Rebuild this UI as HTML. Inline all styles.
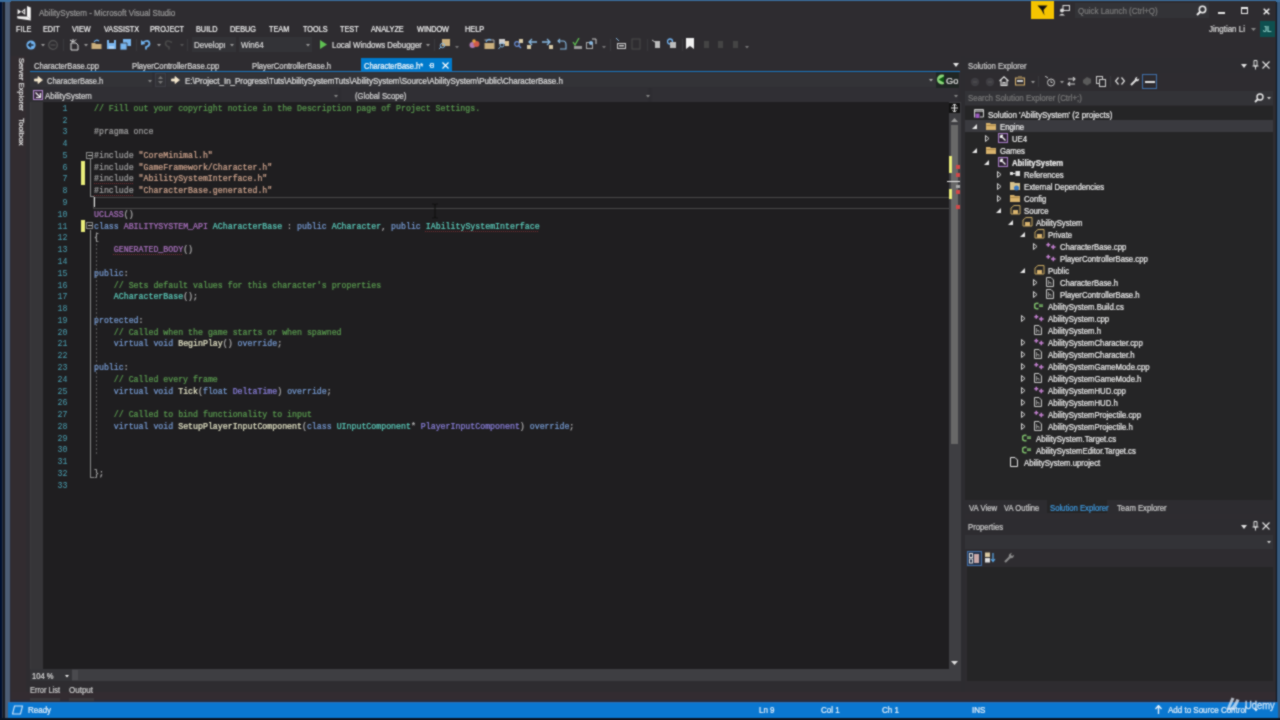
<!DOCTYPE html><html><head><meta charset="utf-8"><style>
*{margin:0;padding:0;box-sizing:border-box}
html,body{width:1280px;height:720px;overflow:hidden;background:#0b1422}
body{font-family:"Liberation Sans",sans-serif;font-size:8px;color:#d0d0d0;position:relative}
.a{position:absolute}
.t{position:absolute;white-space:nowrap;line-height:10px;height:10px;-webkit-text-stroke:0.2px currentColor}
.code{font-family:"Liberation Mono",monospace;font-size:8.25px;line-height:11.78px;white-space:pre;position:absolute;color:#dcdcdc}
.cm{color:#5b9e50}.pp{color:#a2a2a2}.st{color:#d4a890}.kw{color:#779dd6}.ty{color:#5ccfbe}.mc{color:#ac72c2}.fn{color:#e6e6c8}.pa{color:#8c82e0}.pu{color:#b4b4b4}
.code{-webkit-text-stroke:0.2px currentColor}
.ln{font-family:"Liberation Mono",monospace;font-size:8.25px;line-height:11.78px;white-space:pre;position:absolute;color:#4aa0b2;text-align:right}
.sq{text-decoration:underline dotted #7a2c30;text-decoration-thickness:1px;text-underline-offset:1.5px}
.tree .t{color:#e0e0e0}
</style></head><body><svg width="0" height="0" style="position:absolute"><filter id="bl" x="0" y="0" width="100%" height="100%" color-interpolation-filters="sRGB"><feConvolveMatrix order="3" kernelMatrix="1 2 1 2 8 2 1 2 1" divisor="20" edgeMode="duplicate"/></filter></svg><div id="root" style="position:absolute;left:0;top:0;width:1280px;height:720px;filter:url(#bl)">
<div class="a" style="left:0px;top:0px;width:2px;height:720px;background:#001030;"></div>
<div class="a" style="left:1.5px;top:0px;width:1.5px;height:720px;background:#2a3242;"></div>
<div class="a" style="left:3px;top:0px;width:2px;height:720px;background:#161a22;"></div>
<div class="a" style="left:5px;top:0px;width:4.5px;height:720px;background:#4d5d75;"></div>
<div class="a" style="left:9.5px;top:0px;width:1.5px;height:720px;background:#2b2a36;"></div>
<div class="a" style="left:1276.5px;top:0px;width:3.5px;height:720px;background:#37597c;"></div>
<div class="a" style="left:0px;top:0px;width:1280px;height:1.5px;background:#3a6e9e;"></div>
<div class="a" style="left:11px;top:1px;width:1265px;height:717px;background:#2e2c30;"></div>
<div class="a" style="left:11px;top:56px;width:15px;height:645px;background:#322c30;"></div>
<svg class="a" style="left:12px;top:2px" width="24" height="20" viewBox="0 0 24 20"><path d="M5.6 7 L9.2 9.7 L5.6 12.4 Z M13.3 6.2 L9.2 9.7 L13.3 13 Z" fill="#f0f0f0"/><path d="M12.2 8.6 L10.6 9.7 L12.2 10.9 Z" fill="#3a3a3a"/><path d="M15 4 L18.8 5.6 L18.8 17 L15 14.6 Z" fill="#f4f4f4"/><path d="M5 14.2 L15 14.6 L18.8 17 L18.8 18.6 L5.5 16.4 Z" fill="#f0f0f0"/></svg>
<div class="t" style="left:39px;top:8px;font-size:8.6px;color:#9a9a9a;transform:scaleX(0.9302);transform-origin:0 50%;">AbilitySystem - Microsoft Visual Studio</div>
<div class="a" style="left:1031px;top:1px;width:23px;height:18px;background:#f5c400;"></div>
<svg class="a" style="left:1037px;top:5px" width="11" height="11" viewBox="0 0 11 11"><path d="M0.5 0.5 L10.5 0.5 L6.5 5 L7.5 10.5 L4.5 5 Z" fill="#111"/></svg>
<svg class="a" style="left:1059px;top:5px" width="11" height="11" viewBox="0 0 11 11"><rect x="4" y="0.5" width="6.5" height="5" fill="none" stroke="#ddd" stroke-width="1"/><circle cx="3" cy="5.5" r="2" fill="#ddd"/><path d="M0 10.5 Q3 7 6 10.5 Z" fill="#ddd"/></svg>
<div class="a" style="left:1075px;top:3px;width:134px;height:15px;background:#333337;"></div>
<div class="t" style="left:1078px;top:5.5px;font-size:8.6px;color:#7c7c7c;transform:scaleX(0.9302);transform-origin:0 50%;">Quick Launch (Ctrl+Q)</div>
<svg class="a" style="left:1196px;top:5px" width="11" height="11" viewBox="0 0 11 11"><circle cx="6.5" cy="4.5" r="3.2" fill="none" stroke="#eee" stroke-width="1.5"/><path d="M4.3 6.7 L1 10" stroke="#eee" stroke-width="2"/></svg>
<div class="a" style="left:1218px;top:12px;width:7px;height:2px;background:#e6e6e6;"></div>
<div class="a" style="left:1241px;top:7px;width:7px;height:7px;border:1.2px solid #ececec;border-top-width:2.2px"></div>
<svg class="a" style="left:1263px;top:7.5px" width="7" height="7" viewBox="0 0 7 7"><path d="M0.7 0.7 L6.3 6.3 M6.3 0.7 L0.7 6.3" stroke="#f0f0f0" stroke-width="1.5"/></svg>
<div class="t" style="left:1209px;top:24px;font-size:8.6px;color:#dcdcdc;transform:scaleX(0.9302);transform-origin:0 50%;">Jingtian Li</div>
<svg class="a" style="left:1251px;top:28px" width="5" height="3"><path d="M0 0 L5 0 L2.5 3 Z" fill="#888"/></svg>
<div class="a" style="left:1260px;top:21px;width:15px;height:16px;background:#0e4f4f;"></div>
<div class="t" style="left:1262.5px;top:24px;font-size:8.6px;color:#9cd8d0;transform:scaleX(0.9302);transform-origin:0 50%;">JL</div>
<div class="t" style="left:16px;top:23.5px;font-size:8.6px;color:#f4f4f4;transform:scaleX(0.8488);transform-origin:0 50%;">FILE</div>
<div class="t" style="left:43px;top:23.5px;font-size:8.6px;color:#f4f4f4;transform:scaleX(0.8488);transform-origin:0 50%;">EDIT</div>
<div class="t" style="left:72px;top:23.5px;font-size:8.6px;color:#f4f4f4;transform:scaleX(0.8488);transform-origin:0 50%;">VIEW</div>
<div class="t" style="left:104px;top:23.5px;font-size:8.6px;color:#f4f4f4;transform:scaleX(0.8488);transform-origin:0 50%;">VASSISTX</div>
<div class="t" style="left:150px;top:23.5px;font-size:8.6px;color:#f4f4f4;transform:scaleX(0.8488);transform-origin:0 50%;">PROJECT</div>
<div class="t" style="left:195.5px;top:23.5px;font-size:8.6px;color:#f4f4f4;transform:scaleX(0.8488);transform-origin:0 50%;">BUILD</div>
<div class="t" style="left:230px;top:23.5px;font-size:8.6px;color:#f4f4f4;transform:scaleX(0.8488);transform-origin:0 50%;">DEBUG</div>
<div class="t" style="left:268.5px;top:23.5px;font-size:8.6px;color:#f4f4f4;transform:scaleX(0.8488);transform-origin:0 50%;">TEAM</div>
<div class="t" style="left:302.5px;top:23.5px;font-size:8.6px;color:#f4f4f4;transform:scaleX(0.8488);transform-origin:0 50%;">TOOLS</div>
<div class="t" style="left:340px;top:23.5px;font-size:8.6px;color:#f4f4f4;transform:scaleX(0.8488);transform-origin:0 50%;">TEST</div>
<div class="t" style="left:370.5px;top:23.5px;font-size:8.6px;color:#f4f4f4;transform:scaleX(0.8488);transform-origin:0 50%;">ANALYZE</div>
<div class="t" style="left:417px;top:23.5px;font-size:8.6px;color:#f4f4f4;transform:scaleX(0.8488);transform-origin:0 50%;">WINDOW</div>
<div class="t" style="left:464.5px;top:23.5px;font-size:8.6px;color:#f4f4f4;transform:scaleX(0.8488);transform-origin:0 50%;">HELP</div>
<svg class="a" style="left:26px;top:40px" width="10" height="10" viewBox="0 0 10 10"><circle cx="5" cy="5" r="4.6" fill="#6fb1ee"/><path d="M7.5 5 L2.8 5 M5 2.8 L2.6 5 L5 7.2" stroke="#1e2a38" stroke-width="1.4" fill="none"/></svg>
<svg class="a" style="left:40.5px;top:44px" width="4" height="3" viewBox="0 0 4 3"><path d="M0 0 L4 0 L2 2.5 Z" fill="#9a9a9a"/></svg>
<svg class="a" style="left:48px;top:40px" width="10" height="10" viewBox="0 0 10 10"><circle cx="5" cy="5" r="4.3" fill="none" stroke="#555" stroke-width="1.2"/><path d="M2.5 5 L7.5 5" stroke="#555" stroke-width="1.2"/></svg>
<div class="a" style="left:63px;top:39px;width:1px;height:12px;background:#3a393d;"></div>
<svg class="a" style="left:69px;top:39px" width="10" height="12" viewBox="0 0 10 12"><path d="M2 4 L7 4 L9 6 L9 11 L2 11 Z" fill="none" stroke="#ddd" stroke-width="1"/><path d="M1 1 L4 3 M4 0 L4 3 M7 0.5 L4.5 3" stroke="#eee" stroke-width="1"/></svg>
<svg class="a" style="left:83.5px;top:44px" width="4" height="3" viewBox="0 0 4 3"><path d="M0 0 L4 0 L2 2.5 Z" fill="#9a9a9a"/></svg>
<svg class="a" style="left:91px;top:39px" width="11" height="11" viewBox="0 0 11 11"><path d="M0.5 4 L4 4 L5 5 L10.5 5 L10.5 10 L0.5 10 Z" fill="#c9ae7c"/><path d="M3 3 Q5 0 8 2" stroke="#6fb1ee" stroke-width="1.2" fill="none"/></svg>
<svg class="a" style="left:107px;top:40px" width="9" height="9" viewBox="0 0 9 9"><path d="M0 0 L9 0 L9 9 L0 9 Z" fill="#79b6ee"/><rect x="2" y="0" width="5" height="3" fill="#2d2c30"/><rect x="2" y="6" width="5" height="3" fill="#a8d0f5"/></svg>
<svg class="a" style="left:120px;top:39px" width="11" height="11" viewBox="0 0 11 11"><path d="M3 0 L11 0 L11 7 L3 7 Z" fill="#79b6ee"/><path d="M0 4 L7 4 L7 11 L0 11 Z" fill="#79b6ee" stroke="#2d2c30" stroke-width="0.8"/></svg>
<div class="a" style="left:136px;top:39px;width:1px;height:12px;background:#3a393d;"></div>
<svg class="a" style="left:141px;top:39px" width="10" height="11" viewBox="0 0 10 11"><path d="M2 3.5 Q8 0 8.5 4.5 Q8.5 7 5 8 L5 10.5" stroke="#6fb1ee" stroke-width="1.8" fill="none"/><path d="M0 1 L0 6 L4.5 5 Z" fill="#6fb1ee"/></svg>
<svg class="a" style="left:156.5px;top:44px" width="4" height="3" viewBox="0 0 4 3"><path d="M0 0 L4 0 L2 2.5 Z" fill="#9a9a9a"/></svg>
<svg class="a" style="left:164px;top:39px" width="10" height="11" viewBox="0 0 10 11"><path d="M8 3.5 Q2 0 1.5 4.5 Q1.5 7 5 8 L5 10.5" stroke="#4a4a4a" stroke-width="1.6" fill="none"/></svg>
<svg class="a" style="left:179.5px;top:44px" width="4" height="3" viewBox="0 0 4 3"><path d="M0 0 L4 0 L2 2.5 Z" fill="#555"/></svg>
<div class="a" style="left:187px;top:39px;width:1px;height:12px;background:#3a393d;"></div>
<div class="a" style="left:192px;top:37px;width:44px;height:15px;background:#333337;"></div>
<div class="t" style="left:194px;top:39.5px;font-size:8.6px;color:#dcdcdc;transform:scaleX(0.9302);transform-origin:0 50%;">Developı</div>
<svg class="a" style="left:229.5px;top:44px" width="4" height="3" viewBox="0 0 4 3"><path d="M0 0 L4 0 L2 2.5 Z" fill="#9a9a9a"/></svg>
<div class="a" style="left:239px;top:37px;width:73px;height:15px;background:#333337;"></div>
<div class="t" style="left:241px;top:39.5px;font-size:8.6px;color:#dcdcdc;transform:scaleX(0.9302);transform-origin:0 50%;">Win64</div>
<svg class="a" style="left:305.5px;top:44px" width="4" height="3" viewBox="0 0 4 3"><path d="M0 0 L4 0 L2 2.5 Z" fill="#9a9a9a"/></svg>
<svg class="a" style="left:320px;top:40px" width="7" height="9" viewBox="0 0 7 9"><path d="M0 0 L7 4.5 L0 9 Z" fill="#5fbf52"/></svg>
<div class="t" style="left:331.5px;top:39.5px;font-size:8.6px;color:#e0e0e0;transform:scaleX(0.9186);transform-origin:0 50%;">Local Windows Debugger</div>
<svg class="a" style="left:425.5px;top:44px" width="4" height="3" viewBox="0 0 4 3"><path d="M0 0 L4 0 L2 2.5 Z" fill="#9a9a9a"/></svg>
<div class="a" style="left:434px;top:39px;width:1px;height:12px;background:#3a393d;"></div>
<svg class="a" style="left:439px;top:38px" width="11" height="12" viewBox="0 0 11 12"><rect x="3" y="1" width="8" height="7" fill="#c9ae7c"/><circle cx="3.5" cy="7.5" r="2.2" fill="none" stroke="#86b8e0" stroke-width="1"/><path d="M2 9 L0 11" stroke="#86b8e0" stroke-width="1"/></svg>
<svg class="a" style="left:454.5px;top:46px" width="4" height="3" viewBox="0 0 4 3"><path d="M0 0 L4 0 L2 2.5 Z" fill="#777"/></svg>
<svg class="a" style="left:469px;top:39px" width="11" height="10" viewBox="0 0 11 10"><circle cx="3.5" cy="6" r="3" fill="#b07ab0"/><circle cx="7.5" cy="5" r="3" fill="#d05a48"/><circle cx="5" cy="2" r="1.8" fill="#e8a040"/></svg>
<svg class="a" style="left:484px;top:38px" width="11" height="12" viewBox="0 0 11 12"><path d="M0.5 5 L10.5 5 L10.5 11 L0.5 11 Z" fill="#c9ae7c"/><path d="M0.5 2 L10 2 L10 5" stroke="#aaa" fill="none"/><path d="M2 4 Q4 0 7 2" stroke="#6fb1ee" stroke-width="1.2" fill="none"/></svg>
<svg class="a" style="left:498px;top:38px" width="11" height="12" viewBox="0 0 11 12"><rect x="1" y="1" width="6" height="5" fill="#ccc"/><rect x="7" y="3" width="4" height="5" fill="#d9c090"/><circle cx="4" cy="7" r="2" fill="none" stroke="#86b8e0"/><path d="M2.5 8.5 L0.5 11" stroke="#86b8e0"/></svg>
<svg class="a" style="left:513px;top:39px" width="10" height="10" viewBox="0 0 10 10"><circle cx="4" cy="5" r="2.3" fill="none" stroke="#6a8fd8" stroke-width="1.2"/><path d="M5.5 6.5 L8 9" stroke="#6a8fd8" stroke-width="1.3"/><rect x="6" y="0" width="4" height="4" fill="#d6c8a4"/></svg>
<svg class="a" style="left:527px;top:38px" width="11" height="11" viewBox="0 0 11 11"><path d="M5 1 L2 4 L5 7 M2 4 L10 4" stroke="#86b8e0" stroke-width="1.3" fill="none"/><rect x="0" y="7" width="4" height="4" fill="#d6c8a4"/></svg>
<svg class="a" style="left:542px;top:38px" width="11" height="11" viewBox="0 0 11 11"><path d="M5 1 L8 4 L5 7 M0 4 L8 4" stroke="#86b8e0" stroke-width="1.3" fill="none"/><rect x="7" y="7" width="4" height="4" fill="#d6c8a4"/></svg>
<svg class="a" style="left:557px;top:38px" width="10" height="12" viewBox="0 0 10 12"><path d="M3 1 L1 3 L3 5 M1 3 L6 3 Q9 3 9 7 L9 11 L3 11" stroke="#86b8e0" stroke-width="1.1" fill="none"/></svg>
<svg class="a" style="left:572px;top:38px" width="10" height="12" viewBox="0 0 10 12"><path d="M1 4 L3 7 L7 0" stroke="#5fbf52" stroke-width="1.3" fill="none"/><rect x="2" y="8" width="8" height="3" fill="#999"/></svg>
<svg class="a" style="left:586px;top:38px" width="11" height="12" viewBox="0 0 11 12"><rect x="0.5" y="4.5" width="6" height="6" fill="none" stroke="#aaa"/><circle cx="5" cy="5" r="2" fill="#86b8e0"/><path d="M6 1 L10 1 L10 6" stroke="#ccc" fill="none"/></svg>
<svg class="a" style="left:601.5px;top:46px" width="4" height="3" viewBox="0 0 4 3"><path d="M0 0 L4 0 L2 2.5 Z" fill="#777"/></svg>
<div class="a" style="left:610px;top:39px;width:1px;height:12px;background:#3a393d;"></div>
<svg class="a" style="left:616px;top:38px" width="10" height="12" viewBox="0 0 10 12"><path d="M0 0 L3 3" stroke="#86b8e0"/><rect x="1.5" y="5.5" width="8" height="5" fill="none" stroke="#ccc"/><rect x="3" y="7" width="5" height="1.5" fill="#ccc"/></svg>
<svg class="a" style="left:631px;top:38px" width="10" height="12" viewBox="0 0 10 12"><rect x="1" y="1" width="8" height="10" fill="none" stroke="#4a4a4a"/></svg>
<div class="a" style="left:647px;top:39px;width:1px;height:12px;background:#3a393d;"></div>
<svg class="a" style="left:652px;top:39px" width="9" height="10" viewBox="0 0 9 10"><path d="M0 1 L3 3" stroke="#ccc"/><rect x="3" y="2" width="5" height="7" fill="#bbb"/></svg>
<svg class="a" style="left:667px;top:38px" width="9" height="11" viewBox="0 0 9 11"><circle cx="3" cy="3.5" r="2.5" fill="none" stroke="#6fb1ee" stroke-width="1.3"/><rect x="3" y="4" width="6" height="6" fill="#bbb"/></svg>
<div class="a" style="left:682px;top:39px;width:1px;height:12px;background:#3a393d;"></div>
<svg class="a" style="left:686px;top:38px" width="8" height="11" viewBox="0 0 8 11"><path d="M0 0 L8 0 L8 11 L4 8 L0 11 Z" fill="#f0f0f0"/></svg>
<svg class="a" style="left:702px;top:39px" width="8" height="10" viewBox="0 0 8 10"><rect x="2" y="2" width="5" height="7" fill="#444"/></svg>
<svg class="a" style="left:716px;top:39px" width="8" height="10" viewBox="0 0 8 10"><rect x="2" y="2" width="5" height="7" fill="#444"/></svg>
<svg class="a" style="left:731px;top:39px" width="8" height="10" viewBox="0 0 8 10"><rect x="2" y="2" width="5" height="7" fill="#444"/></svg>
<svg class="a" style="left:744.5px;top:46px" width="4" height="3" viewBox="0 0 4 3"><path d="M0 0 L4 0 L2 2.5 Z" fill="#777"/></svg>
<div class="t" style="left:15.5px;top:58px;font-size:7.6px;color:#e6e6e6;transform-origin:0 0;transform:translate(10px,0) rotate(90deg)">Server Explorer</div>
<div class="t" style="left:15.5px;top:118px;font-size:8px;color:#e6e6e6;transform-origin:0 0;transform:translate(10px,0) rotate(90deg)">Toolbox</div>
<div class="t" style="left:33.5px;top:60.5px;font-size:8.6px;color:#dcdcdc;transform:scaleX(0.8837);transform-origin:0 50%;">CharacterBase.cpp</div>
<div class="t" style="left:131.5px;top:60.5px;font-size:8.6px;color:#dcdcdc;transform:scaleX(0.8953);transform-origin:0 50%;">PlayerControllerBase.cpp</div>
<div class="t" style="left:252px;top:60.5px;font-size:8.6px;color:#dcdcdc;transform:scaleX(0.8953);transform-origin:0 50%;">PlayerControllerBase.h</div>
<div class="a" style="left:361px;top:58px;width:91px;height:13px;background:#007acc;"></div>
<div class="t" style="left:364px;top:60.5px;font-size:8.6px;color:#ffffff;transform:scaleX(0.8721);transform-origin:0 50%;">CharacterBase.h*</div>
<svg class="a" style="left:428px;top:62px" width="7" height="7" viewBox="0 0 7 7"><path d="M1 3.5 L6 3.5 M2.5 1.5 L2.5 5.5 M2.5 1.5 L5.5 1.5 L5.5 5.5 L2.5 5.5" stroke="#d0e6f8" stroke-width="1" fill="none"/></svg>
<svg class="a" style="left:442px;top:62px" width="7" height="7" viewBox="0 0 7 7"><path d="M0.5 0.5 L6.5 6.5 M6.5 0.5 L0.5 6.5" stroke="#ffffff" stroke-width="1.2"/></svg>
<svg class="a" style="left:953px;top:63px" width="6" height="4" viewBox="0 0 6 4"><path d="M0 0 L6 0 L3 4 Z" fill="#e8e8e8"/></svg>
<div class="a" style="left:30px;top:70.5px;width:930px;height:1.5px;background:#1a78c2;"></div>
<div class="a" style="left:30px;top:72px;width:930px;height:16px;background:#2f2e33;"></div>
<div class="a" style="left:30px;top:72px;width:122px;height:15px;background:#333337;"></div>
<svg class="a" style="left:34px;top:76px" width="9" height="8" viewBox="0 0 9 8"><path d="M0.5 3 L4 3 L4 0.5 L8.5 4 L4 7.5 L4 5 L0.5 5 Z" fill="#f2e6cc" stroke="#f2e6cc" stroke-width="0.8" stroke-linejoin="round"/></svg>
<div class="t" style="left:47px;top:75.5px;font-size:8.6px;color:#dcdcdc;transform:scaleX(0.8721);transform-origin:0 50%;">CharacterBase.h</div>
<svg class="a" style="left:147.5px;top:79.5px" width="4" height="3" viewBox="0 0 4 3"><path d="M0 0 L4 0 L2 2.5 Z" fill="#888"/></svg>
<div class="a" style="left:155px;top:73px;width:11px;height:14px;background:#333337;border:1px solid #3f3f46"></div>
<svg class="a" style="left:158px;top:76px" width="5" height="8" viewBox="0 0 5 8"><path d="M0 3 L2.5 0 L5 3 Z M0 5 L2.5 8 L5 5 Z" fill="#777"/></svg>
<div class="a" style="left:167px;top:73px;width:770px;height:14px;background:#333337;"></div>
<svg class="a" style="left:171px;top:76px" width="9" height="8" viewBox="0 0 9 8"><path d="M0.5 3 L4 3 L4 0.5 L8.5 4 L4 7.5 L4 5 L0.5 5 Z" fill="#f2e6cc" stroke="#f2e6cc" stroke-width="0.8" stroke-linejoin="round"/></svg>
<div class="t" style="left:185px;top:75.5px;font-size:8.6px;color:#e0e0e0;transform:scaleX(0.9267);transform-origin:0 50%;">E:\Project_In_Progress\Tuts\AbilitySystemTuts\AbilitySystem\Source\AbilitySystem\Public\CharacterBase.h</div>
<svg class="a" style="left:928.5px;top:79px" width="4" height="3" viewBox="0 0 4 3"><path d="M0 0 L4 0 L2 2.5 Z" fill="#aaa"/></svg>
<div class="a" style="left:936px;top:72px;width:23px;height:16px;background:#1f2624;"></div>
<svg class="a" style="left:936px;top:73px" width="11" height="13" viewBox="0 0 11 13"><circle cx="6" cy="6.5" r="5" fill="#8ad67a"/><path d="M9.5 2.5 L2.5 6.5 L9.5 10.5 Z" fill="#0b5a10"/><path d="M8 1 L11 1 L11 12 L8 12 Z" fill="#1f2624"/></svg>
<div class="t" style="left:946px;top:75.5px;font-size:8.6px;color:#e6e6e6;transform:scaleX(1.0698);transform-origin:0 50%;">Go</div>
<div class="a" style="left:30px;top:88px;width:930px;height:14px;background:#2d2c31;"></div>
<div class="a" style="left:30px;top:88px;width:308px;height:14px;background:#302f34;"></div>
<div class="a" style="left:341px;top:88px;width:307px;height:14px;background:#302f34;"></div>
<div class="a" style="left:652px;top:88px;width:306px;height:14px;background:#302f34;"></div>
<svg class="a" style="left:645.5px;top:94.5px" width="4" height="3" viewBox="0 0 4 3"><path d="M0 0 L4 0 L2 2.5 Z" fill="#888"/></svg>
<svg class="a" style="left:33px;top:90px" width="10" height="10" viewBox="0 0 10 10"><rect x="0.5" y="0.5" width="9" height="9" fill="#3a2a40" stroke="#b48ad0" stroke-width="1"/><path d="M2.5 2.5 L7.5 7.5 M7.5 3 L7.5 7.5 L3 7.5" stroke="#f0f0f0" stroke-width="1.2" fill="none"/></svg>
<div class="t" style="left:45px;top:90.5px;font-size:8.6px;color:#dcdcdc;transform:scaleX(0.9070);transform-origin:0 50%;">AbilitySystem</div>
<svg class="a" style="left:333.5px;top:94.5px" width="4" height="3" viewBox="0 0 4 3"><path d="M0 0 L4 0 L2 2.5 Z" fill="#888"/></svg>
<div class="t" style="left:355.3px;top:90.5px;font-size:8.6px;color:#dcdcdc;transform:scaleX(0.8953);transform-origin:0 50%;">(Global Scope)</div>
<svg class="a" style="left:953.5px;top:94.5px" width="4" height="3" viewBox="0 0 4 3"><path d="M0 0 L4 0 L2 2.5 Z" fill="#888"/></svg>
<div class="a" style="left:30px;top:102px;width:919px;height:567px;background:#1f1e20;"></div>
<div class="a" style="left:30px;top:102px;width:13px;height:567px;background:#363538;"></div>
<div class="a" style="left:30px;top:102px;width:1px;height:567px;background:#3c3b3e;"></div>
<div class="a" style="left:93px;top:197px;width:856px;height:11.5px;background:transparent;border:1px solid #484848;border-right:none"></div>
<div class="a" style="left:94px;top:197.04px;width:1px;height:10px;background:#e8e8e8;"></div>
<div class="ln" style="left:29.5px;top:102.8px;width:38px">1
2
3
4
5
6
7
8
9
10
11
12
13
14
15
16
17
18
19
20
21
22
23
24
25
26
27
28
29
30
31
32
33</div>
<div class="a" style="left:81px;top:161px;width:4px;height:24px;background:#e8ec7a;"></div>
<div class="a" style="left:81px;top:220px;width:4px;height:12px;background:#e8ec7a;"></div>
<div class="a" style="left:89.5px;top:159px;width:1px;height:37px;background:#8a8a8a;"></div>
<div class="a" style="left:89.5px;top:195.5px;width:4px;height:1px;background:#8a8a8a;"></div>
<div class="a" style="left:89.5px;top:230px;width:1px;height:248px;background:#8a8a8a;"></div>
<div class="a" style="left:89.5px;top:477px;width:4px;height:1px;background:#8a8a8a;"></div>
<div class="a" style="left:86px;top:152px;width:7px;height:7px;border:1px solid #8a8a8a;background:#1e1e1e"></div>
<div class="a" style="left:87.5px;top:155px;width:4px;height:1px;background:#bdbdbd;"></div>
<div class="a" style="left:86px;top:222px;width:7px;height:7px;border:1px solid #8a8a8a;background:#1e1e1e"></div>
<div class="a" style="left:87.5px;top:225px;width:4px;height:1px;background:#bdbdbd;"></div>
<div class="a" style="left:96px;top:232.38px;width:1px;height:223.82px;background:repeating-linear-gradient(#5a5a5a 0 2px,transparent 2px 4px)"></div>
<div class="code" style="left:94px;top:102.8px"><span class="cm">// Fill out your copyright notice in the Description page of Project Settings.</span>

<span class="pp">#pragma once</span>

<span class="pp">#include</span> <span class="st">&quot;CoreMinimal.h&quot;</span>
<span class="pp">#include</span> <span class="st">&quot;GameFramework/Character.h&quot;</span>
<span class="pp sq">#include</span> <span class="st">&quot;AbilitySystemInterface.h&quot;</span>
<span class="pp sq">#include</span> <span class="st">&quot;CharacterBase.generated.h&quot;</span>

<span class="mc">UCLASS</span><span class="pu">()</span>
<span class="kw">class</span> <span class="mc">ABILITYSYSTEM_API</span> <span class="ty">ACharacterBase</span> <span class="pu">:</span> <span class="kw">public</span> <span class="ty">ACharacter</span><span class="pu">,</span> <span class="kw">public</span> <span class="ty sq">IAbilitySystemInterface</span>
<span class="pu">{</span>
    <span class="mc sq">GENERATED_BODY</span><span class="pu">()</span>

<span class="kw">public</span><span class="pu">:</span>
    <span class="cm">// Sets default values for this character&#x27;s properties</span>
    <span class="ty">ACharacterBase</span><span class="pu">();</span>

<span class="kw">protected</span><span class="pu">:</span>
    <span class="cm">// Called when the game starts or when spawned</span>
    <span class="kw">virtual</span> <span class="kw">void</span> <span class="fn">BeginPlay</span><span class="pu">()</span> <span class="kw">override</span><span class="pu">;</span>

<span class="kw">public</span><span class="pu">:</span>
    <span class="cm">// Called every frame</span>
    <span class="kw">virtual</span> <span class="kw">void</span> <span class="fn">Tick</span><span class="pu">(</span><span class="kw">float</span> <span class="pa">DeltaTime</span><span class="pu">)</span> <span class="kw">override</span><span class="pu">;</span>

    <span class="cm">// Called to bind functionality to input</span>
    <span class="kw">virtual</span> <span class="kw">void</span> <span class="fn">SetupPlayerInputComponent</span><span class="pu">(</span><span class="kw">class</span> <span class="ty">UInputComponent</span><span class="pu">*</span> <span class="pa">PlayerInputComponent</span><span class="pu">)</span> <span class="kw">override</span><span class="pu">;</span>



<span class="pu">};</span>
</div>
<svg class="a" style="left:431px;top:203px" width="8" height="16" viewBox="0 0 8 16"><path d="M1 1 L3 1 Q4 1.5 4 3 L4 13 Q4 14.5 3 15 L1 15 M7 1 L5 1 Q4 1.5 4 3 M4 13 Q4 14.5 5 15 L7 15" stroke="#111" stroke-width="1.2" fill="none"/></svg>
<div class="a" style="left:949px;top:102px;width:12px;height:567px;background:#3e3e42;"></div>
<div class="a" style="left:949px;top:103px;width:11px;height:10px;background:#111;"></div>
<svg class="a" style="left:951px;top:104px" width="7" height="8" viewBox="0 0 7 8"><path d="M0 4 L7 4 M3.5 0 L3.5 8 M1.5 1.5 L3.5 0 L5.5 1.5 M1.5 6.5 L3.5 8 L5.5 6.5" stroke="#eee" stroke-width="1" fill="none"/></svg>
<svg class="a" style="left:951px;top:118px" width="7" height="4" viewBox="0 0 7 4"><path d="M0 4 L3.5 0 L7 4 Z" fill="#999"/></svg>
<div class="a" style="left:951px;top:125px;width:6.5px;height:319px;background:#686868;"></div>
<div class="a" style="left:949px;top:156px;width:3px;height:17px;background:#e8ec7a;"></div>
<div class="a" style="left:949px;top:189px;width:3px;height:10px;background:#e8ec7a;"></div>
<div class="a" style="left:956px;top:165px;width:4px;height:4px;background:#d04848;"></div>
<div class="a" style="left:956px;top:173px;width:4px;height:4px;background:#d04848;"></div>
<div class="a" style="left:956px;top:190px;width:4px;height:4px;background:#d04848;"></div>
<div class="a" style="left:956px;top:205px;width:4px;height:4px;background:#d04848;"></div>
<div class="a" style="left:956px;top:185px;width:4px;height:3px;background:#aaa;"></div>
<div class="a" style="left:947px;top:181px;width:13px;height:1px;background:#e8e8e8;"></div>
<svg class="a" style="left:951px;top:661px" width="7" height="4" viewBox="0 0 7 4"><path d="M0 0 L7 0 L3.5 4 Z" fill="#ddd"/></svg>
<div class="a" style="left:30px;top:669px;width:931px;height:12px;background:#3e3e42;"></div>
<div class="a" style="left:30px;top:669px;width:42px;height:12px;background:#333337;"></div>
<div class="t" style="left:32px;top:670.5px;font-size:8.6px;color:#dcdcdc;transform:scaleX(0.8837);transform-origin:0 50%;">104 %</div>
<svg class="a" style="left:64.5px;top:675px" width="4" height="3" viewBox="0 0 4 3"><path d="M0 0 L4 0 L2 2.5 Z" fill="#eee"/></svg>
<div class="a" style="left:72px;top:670px;width:6px;height:10px;background:#4a4a4e;"></div>
<div class="a" style="left:30px;top:681px;width:931px;height:1px;background:#2d2c30;"></div>
<div class="a" style="left:961px;top:56px;width:4px;height:645px;background:#2d2c30;"></div>
<div class="a" style="left:965px;top:58px;width:308px;height:15px;background:#2d2c30;"></div>
<div class="t" style="left:968px;top:61px;font-size:8.6px;color:#d0d0d0;transform:scaleX(0.8953);transform-origin:0 50%;">Solution Explorer</div>
<svg class="a" style="left:1241px;top:64px" width="6" height="4" viewBox="0 0 6 4"><path d="M0 0 L6 0 L3 4 Z" fill="#e0e0e0"/></svg>
<svg class="a" style="left:1252px;top:60px" width="7" height="10" viewBox="0 0 7 10"><path d="M2 0.5 L5 0.5 L5 6 L2 6 Z M0.5 6 L6.5 6 M3.5 6 L3.5 9.5" stroke="#e0e0e0" stroke-width="1" fill="none"/></svg>
<svg class="a" style="left:1262px;top:61px" width="8" height="8" viewBox="0 0 8 8"><path d="M0.5 0.5 L7.5 7.5 M7.5 0.5 L0.5 7.5" stroke="#e0e0e0" stroke-width="1.2"/></svg>
<svg class="a" style="left:970px;top:77px" width="10" height="10" viewBox="0 0 10 10"><circle cx="5" cy="5" r="4.2" fill="#3e3d42"/><path d="M3 5 L7 5" stroke="#555" stroke-width="1"/></svg>
<svg class="a" style="left:985px;top:77px" width="10" height="10" viewBox="0 0 10 10"><circle cx="5" cy="5" r="4.2" fill="#3e3d42"/><path d="M3 5 L7 5" stroke="#555" stroke-width="1"/></svg>
<svg class="a" style="left:999px;top:76px" width="10" height="10" viewBox="0 0 10 10"><path d="M0.5 5 L5 0.8 L9.5 5 M2 4 L2 9.5 L8 9.5 L8 4 M4 9.5 L4 6.5 L6 6.5 L6 9.5" stroke="#e0e0e0" stroke-width="1.1" fill="none"/></svg>
<svg class="a" style="left:1015px;top:76px" width="11" height="10" viewBox="0 0 11 10"><rect x="0.5" y="2" width="9" height="7" fill="none" stroke="#d9b36c"/><rect x="2" y="4" width="6" height="2" fill="#ccc"/><path d="M3 0 L7 0" stroke="#d9b36c"/></svg>
<svg class="a" style="left:1030.5px;top:81px" width="4" height="3" viewBox="0 0 4 3"><path d="M0 0 L4 0 L2 2.5 Z" fill="#999"/></svg>
<div class="a" style="left:1038px;top:76px;width:1px;height:11px;background:#3a393d;"></div>
<svg class="a" style="left:1045px;top:76px" width="11" height="11" viewBox="0 0 11 11"><circle cx="6" cy="6.5" r="3.5" fill="none" stroke="#ccc"/><path d="M6 4.5 L6 6.5 L7.5 6.5 M0 0 L3 2" stroke="#ccc"/></svg>
<svg class="a" style="left:1059.5px;top:81px" width="4" height="3" viewBox="0 0 4 3"><path d="M0 0 L4 0 L2 2.5 Z" fill="#999"/></svg>
<svg class="a" style="left:1067px;top:77px" width="9" height="9" viewBox="0 0 9 9"><path d="M1 2 L8 2 M6 0 L8 2 L6 4 M8 7 L1 7 M3 5 L1 7 L3 9" stroke="#ccc" stroke-width="1.1" fill="none"/></svg>
<svg class="a" style="left:1082px;top:76px" width="10" height="10" viewBox="0 0 10 10"><path d="M1 4 L5 1 L9 3 L9 7 L5 9.5 L1 7 Z" fill="#5a5a5a"/></svg>
<svg class="a" style="left:1096px;top:76px" width="10" height="11" viewBox="0 0 10 11"><rect x="0.5" y="0.5" width="6" height="7" fill="none" stroke="#ccc"/><rect x="3.5" y="3.5" width="6" height="7" fill="#2d2c30" stroke="#ccc"/></svg>
<div class="a" style="left:1110px;top:76px;width:1px;height:11px;background:#3a393d;"></div>
<svg class="a" style="left:1115px;top:77px" width="10" height="8" viewBox="0 0 10 8"><path d="M3.5 0.5 L0.5 4 L3.5 7.5 M6.5 0.5 L9.5 4 L6.5 7.5" stroke="#e0e0e0" stroke-width="1.2" fill="none"/></svg>
<svg class="a" style="left:1130px;top:76px" width="10" height="10" viewBox="0 0 10 10"><path d="M1 9 L5.5 4.5" stroke="#e0e0e0" stroke-width="2"/><path d="M5 5 Q4 1.5 7.5 0.8 L6.5 2.5 L7.5 3.5 L9.2 2.5 Q9 6 5.5 5.2" fill="#e0e0e0"/></svg>
<div class="a" style="left:1142px;top:74px;width:15px;height:15px;background:transparent;border:1px solid #3f6fa8"></div>
<div class="a" style="left:1145px;top:81px;width:10px;height:2px;background:#e0e0e0;"></div>
<div class="a" style="left:965px;top:91px;width:308px;height:14px;background:#333337;"></div>
<div class="t" style="left:968px;top:93px;font-size:8.6px;color:#7a7a7a;transform:scaleX(0.9186);transform-origin:0 50%;">Search Solution Explorer (Ctrl+;)</div>
<svg class="a" style="left:1254px;top:93px" width="10" height="10" viewBox="0 0 10 10"><circle cx="6" cy="4" r="3" fill="none" stroke="#e6e6e6" stroke-width="1.4"/><path d="M4 6 L1 9" stroke="#e6e6e6" stroke-width="1.8"/></svg>
<svg class="a" style="left:1266.5px;top:97px" width="4" height="3" viewBox="0 0 4 3"><path d="M0 0 L4 0 L2 2.5 Z" fill="#ccc"/></svg>
<div class="a" style="left:965px;top:106px;width:308px;height:394px;background:#252526;"></div>
<div class="a" style="left:965px;top:120px;width:308px;height:12px;background:#3a3a3f;"></div>
<svg class="a" style="left:974px;top:109px" width="10" height="9" viewBox="0 0 10 9"><path d="M0.5 8.5 L0.5 0.5 L9.5 0.5 L9.5 8 L6 8" stroke="#d0d0d0" fill="none" stroke-width="1"/><rect x="0" y="1.5" width="10" height="1.2" fill="#d0d0d0"/><rect x="1.5" y="4.5" width="4" height="4.5" fill="#9b59c0"/></svg>
<div class="t" style="left:987.5px;top:109.5px;font-size:8.6px;color:#f0f0f0;transform:scaleX(0.9302);transform-origin:0 50%;">Solution &#x27;AbilitySystem&#x27; (2 projects)</div>
<svg class="a" style="left:972px;top:123.5px" width="5" height="5" viewBox="0 0 5 5"><path d="M5 0 L5 5 L0 5 Z" fill="#e6e6e6"/></svg>
<svg class="a" style="left:986px;top:122px" width="10" height="8" viewBox="0 0 10 8"><path d="M0 1 L4 1 L5 2 L10 2 L10 8 L0 8 Z" fill="#d7b26c"/><path d="M0.5 3.5 L9.5 3.5" stroke="#8a6a30" stroke-width="0.6"/></svg>
<div class="t" style="left:999.5px;top:121.5px;font-size:8.6px;color:#f0f0f0;transform:scaleX(0.9012);transform-origin:0 50%;">Engine</div>
<svg class="a" style="left:984.5px;top:134.5px" width="5" height="7" viewBox="0 0 5 7"><path d="M0.5 0.5 L4 3.5 L0.5 6.5 Z" fill="none" stroke="#d6d6d6" stroke-width="1"/></svg>
<svg class="a" style="left:998px;top:133px" width="10" height="10" viewBox="0 0 10 10"><rect x="0.5" y="0.5" width="9" height="9" fill="#2e2333" stroke="#a87cc8" stroke-width="1"/><path d="M2.5 2.5 L7.5 7.5 M2.5 2.5 L2.5 5 M2.5 2.5 L5 2.5" stroke="#f2f2f2" stroke-width="1.3" fill="none"/></svg>
<div class="t" style="left:1011.5px;top:133.5px;font-size:8.6px;color:#f0f0f0;transform:scaleX(0.9012);transform-origin:0 50%;">UE4</div>
<svg class="a" style="left:972px;top:147.5px" width="5" height="5" viewBox="0 0 5 5"><path d="M5 0 L5 5 L0 5 Z" fill="#e6e6e6"/></svg>
<svg class="a" style="left:986px;top:146px" width="10" height="8" viewBox="0 0 10 8"><path d="M0 1 L4 1 L5 2 L10 2 L10 8 L0 8 Z" fill="#d7b26c"/><path d="M0.5 3.5 L9.5 3.5" stroke="#8a6a30" stroke-width="0.6"/></svg>
<div class="t" style="left:999.5px;top:145.5px;font-size:8.6px;color:#f0f0f0;transform:scaleX(0.9012);transform-origin:0 50%;">Games</div>
<svg class="a" style="left:984px;top:159.5px" width="5" height="5" viewBox="0 0 5 5"><path d="M5 0 L5 5 L0 5 Z" fill="#e6e6e6"/></svg>
<svg class="a" style="left:998px;top:157px" width="10" height="10" viewBox="0 0 10 10"><rect x="0.5" y="0.5" width="9" height="9" fill="#2e2333" stroke="#a87cc8" stroke-width="1"/><path d="M2.5 2.5 L7.5 7.5 M2.5 2.5 L2.5 5 M2.5 2.5 L5 2.5" stroke="#f2f2f2" stroke-width="1.3" fill="none"/></svg>
<div class="t" style="left:1011.5px;top:157.5px;font-size:8.6px;color:#f0f0f0;transform:scaleX(0.9012);transform-origin:0 50%;font-weight:bold">AbilitySystem</div>
<svg class="a" style="left:996.5px;top:170.5px" width="5" height="7" viewBox="0 0 5 7"><path d="M0.5 0.5 L4 3.5 L0.5 6.5 Z" fill="none" stroke="#d6d6d6" stroke-width="1"/></svg>
<svg class="a" style="left:1010px;top:171px" width="10" height="6" viewBox="0 0 10 6"><rect x="0" y="1" width="3" height="3" fill="#e0e0e0"/><rect x="5.5" y="0" width="4.5" height="5" fill="#e0e0e0"/><path d="M3 2.5 L5.5 2.5" stroke="#e0e0e0"/></svg>
<div class="t" style="left:1023.5px;top:169.5px;font-size:8.6px;color:#f0f0f0;transform:scaleX(0.9012);transform-origin:0 50%;">References</div>
<svg class="a" style="left:996.5px;top:182.5px" width="5" height="7" viewBox="0 0 5 7"><path d="M0.5 0.5 L4 3.5 L0.5 6.5 Z" fill="none" stroke="#d6d6d6" stroke-width="1"/></svg>
<svg class="a" style="left:1010px;top:181px" width="10" height="10" viewBox="0 0 10 10"><path d="M0 1 L4 1 L5 2 L10 2 L10 9 L0 9 Z" fill="#d7c28c"/><circle cx="6.5" cy="7" r="2.5" fill="#3a78c0"/></svg>
<div class="t" style="left:1023.5px;top:181.5px;font-size:8.6px;color:#f0f0f0;transform:scaleX(0.9012);transform-origin:0 50%;">External Dependencies</div>
<svg class="a" style="left:996.5px;top:194.5px" width="5" height="7" viewBox="0 0 5 7"><path d="M0.5 0.5 L4 3.5 L0.5 6.5 Z" fill="none" stroke="#d6d6d6" stroke-width="1"/></svg>
<svg class="a" style="left:1010px;top:194px" width="10" height="8" viewBox="0 0 10 8"><path d="M0 1 L4 1 L5 2 L10 2 L10 8 L0 8 Z" fill="#d7b26c"/><path d="M0.5 3.5 L9.5 3.5" stroke="#8a6a30" stroke-width="0.6"/></svg>
<div class="t" style="left:1023.5px;top:193.5px;font-size:8.6px;color:#f0f0f0;transform:scaleX(0.9012);transform-origin:0 50%;">Config</div>
<svg class="a" style="left:996px;top:207.5px" width="5" height="5" viewBox="0 0 5 5"><path d="M5 0 L5 5 L0 5 Z" fill="#e6e6e6"/></svg>
<svg class="a" style="left:1010px;top:205px" width="11" height="10" viewBox="0 0 11 10"><path d="M1 3 L4 0.5 L10 0.5 L10 9 L1 9 Z" fill="none" stroke="#c8a860" stroke-width="1"/><path d="M3 5 L8 5 L8 9 L3 9 Z" fill="#d7b26c"/></svg>
<div class="t" style="left:1023.5px;top:205.5px;font-size:8.6px;color:#f0f0f0;transform:scaleX(0.9012);transform-origin:0 50%;">Source</div>
<svg class="a" style="left:1008px;top:219.5px" width="5" height="5" viewBox="0 0 5 5"><path d="M5 0 L5 5 L0 5 Z" fill="#e6e6e6"/></svg>
<svg class="a" style="left:1022px;top:217px" width="11" height="10" viewBox="0 0 11 10"><path d="M1 3 L4 0.5 L10 0.5 L10 9 L1 9 Z" fill="none" stroke="#c8a860" stroke-width="1"/><path d="M3 5 L8 5 L8 9 L3 9 Z" fill="#d7b26c"/></svg>
<div class="t" style="left:1035.5px;top:217.5px;font-size:8.6px;color:#f0f0f0;transform:scaleX(0.9012);transform-origin:0 50%;">AbilitySystem</div>
<svg class="a" style="left:1020px;top:231.5px" width="5" height="5" viewBox="0 0 5 5"><path d="M5 0 L5 5 L0 5 Z" fill="#e6e6e6"/></svg>
<svg class="a" style="left:1034px;top:229px" width="11" height="10" viewBox="0 0 11 10"><path d="M1 3 L4 0.5 L10 0.5 L10 9 L1 9 Z" fill="none" stroke="#c8a860" stroke-width="1"/><path d="M3 5 L8 5 L8 9 L3 9 Z" fill="#d7b26c"/></svg>
<div class="t" style="left:1047.5px;top:229.5px;font-size:8.6px;color:#f0f0f0;transform:scaleX(0.9012);transform-origin:0 50%;">Private</div>
<svg class="a" style="left:1032.5px;top:242.5px" width="5" height="7" viewBox="0 0 5 7"><path d="M0.5 0.5 L4 3.5 L0.5 6.5 Z" fill="none" stroke="#d6d6d6" stroke-width="1"/></svg>
<svg class="a" style="left:1046px;top:242px" width="10" height="8" viewBox="0 0 10 8"><path d="M0.3 2.8 L4.3 2.8 M2.3 0.8 L2.3 4.8 M5 5 L9.6 5 M7.3 2.7 L7.3 7.3" stroke="#c27fcf" stroke-width="1.5"/></svg>
<div class="t" style="left:1059.5px;top:241.5px;font-size:8.6px;color:#f0f0f0;transform:scaleX(0.9012);transform-origin:0 50%;">CharacterBase.cpp</div>
<svg class="a" style="left:1046px;top:254px" width="10" height="8" viewBox="0 0 10 8"><path d="M0.3 2.8 L4.3 2.8 M2.3 0.8 L2.3 4.8 M5 5 L9.6 5 M7.3 2.7 L7.3 7.3" stroke="#c27fcf" stroke-width="1.5"/></svg>
<div class="t" style="left:1059.5px;top:253.5px;font-size:8.6px;color:#f0f0f0;transform:scaleX(0.9012);transform-origin:0 50%;">PlayerControllerBase.cpp</div>
<svg class="a" style="left:1020px;top:267.5px" width="5" height="5" viewBox="0 0 5 5"><path d="M5 0 L5 5 L0 5 Z" fill="#e6e6e6"/></svg>
<svg class="a" style="left:1034px;top:265px" width="11" height="10" viewBox="0 0 11 10"><path d="M1 3 L4 0.5 L10 0.5 L10 9 L1 9 Z" fill="none" stroke="#c8a860" stroke-width="1"/><path d="M3 5 L8 5 L8 9 L3 9 Z" fill="#d7b26c"/></svg>
<div class="t" style="left:1047.5px;top:265.5px;font-size:8.6px;color:#f0f0f0;transform:scaleX(0.9012);transform-origin:0 50%;">Public</div>
<svg class="a" style="left:1032.5px;top:278.5px" width="5" height="7" viewBox="0 0 5 7"><path d="M0.5 0.5 L4 3.5 L0.5 6.5 Z" fill="none" stroke="#d6d6d6" stroke-width="1"/></svg>
<svg class="a" style="left:1046px;top:277px" width="8" height="10" viewBox="0 0 8 10"><path d="M0.5 0.5 L5 0.5 L7.5 3 L7.5 9.5 L0.5 9.5 Z" fill="none" stroke="#c8c8c8" stroke-width="1"/><path d="M2.5 3 L2.5 8 M2.5 5.5 L5 5.5 L5 8" stroke="#aaa" stroke-width="0.8" fill="none"/></svg>
<div class="t" style="left:1059.5px;top:277.5px;font-size:8.6px;color:#f0f0f0;transform:scaleX(0.9012);transform-origin:0 50%;">CharacterBase.h</div>
<svg class="a" style="left:1032.5px;top:290.5px" width="5" height="7" viewBox="0 0 5 7"><path d="M0.5 0.5 L4 3.5 L0.5 6.5 Z" fill="none" stroke="#d6d6d6" stroke-width="1"/></svg>
<svg class="a" style="left:1046px;top:289px" width="8" height="10" viewBox="0 0 8 10"><path d="M0.5 0.5 L5 0.5 L7.5 3 L7.5 9.5 L0.5 9.5 Z" fill="none" stroke="#c8c8c8" stroke-width="1"/><path d="M2.5 3 L2.5 8 M2.5 5.5 L5 5.5 L5 8" stroke="#aaa" stroke-width="0.8" fill="none"/></svg>
<div class="t" style="left:1059.5px;top:289.5px;font-size:8.6px;color:#f0f0f0;transform:scaleX(0.9012);transform-origin:0 50%;">PlayerControllerBase.h</div>
<svg class="a" style="left:1034px;top:302px" width="10" height="8" viewBox="0 0 10 8"><path d="M4.5 1.5 Q0.5 0.5 0.5 4 Q0.5 7.5 4.5 6.5" stroke="#7fc16c" stroke-width="1.6" fill="none"/><path d="M6 2 L6 5 M8 2 L8 5 M5 3 L9 3 M5 4.5 L9 4.5" stroke="#7fc16c" stroke-width="0.8"/></svg>
<div class="t" style="left:1047.5px;top:301.5px;font-size:8.6px;color:#f0f0f0;transform:scaleX(0.9012);transform-origin:0 50%;">AbilitySystem.Build.cs</div>
<svg class="a" style="left:1020.5px;top:314.5px" width="5" height="7" viewBox="0 0 5 7"><path d="M0.5 0.5 L4 3.5 L0.5 6.5 Z" fill="none" stroke="#d6d6d6" stroke-width="1"/></svg>
<svg class="a" style="left:1034px;top:314px" width="10" height="8" viewBox="0 0 10 8"><path d="M0.3 2.8 L4.3 2.8 M2.3 0.8 L2.3 4.8 M5 5 L9.6 5 M7.3 2.7 L7.3 7.3" stroke="#c27fcf" stroke-width="1.5"/></svg>
<div class="t" style="left:1047.5px;top:313.5px;font-size:8.6px;color:#f0f0f0;transform:scaleX(0.9012);transform-origin:0 50%;">AbilitySystem.cpp</div>
<svg class="a" style="left:1034px;top:325px" width="8" height="10" viewBox="0 0 8 10"><path d="M0.5 0.5 L5 0.5 L7.5 3 L7.5 9.5 L0.5 9.5 Z" fill="none" stroke="#c8c8c8" stroke-width="1"/><path d="M2.5 3 L2.5 8 M2.5 5.5 L5 5.5 L5 8" stroke="#aaa" stroke-width="0.8" fill="none"/></svg>
<div class="t" style="left:1047.5px;top:325.5px;font-size:8.6px;color:#f0f0f0;transform:scaleX(0.9012);transform-origin:0 50%;">AbilitySystem.h</div>
<svg class="a" style="left:1020.5px;top:338.5px" width="5" height="7" viewBox="0 0 5 7"><path d="M0.5 0.5 L4 3.5 L0.5 6.5 Z" fill="none" stroke="#d6d6d6" stroke-width="1"/></svg>
<svg class="a" style="left:1034px;top:338px" width="10" height="8" viewBox="0 0 10 8"><path d="M0.3 2.8 L4.3 2.8 M2.3 0.8 L2.3 4.8 M5 5 L9.6 5 M7.3 2.7 L7.3 7.3" stroke="#c27fcf" stroke-width="1.5"/></svg>
<div class="t" style="left:1047.5px;top:337.5px;font-size:8.6px;color:#f0f0f0;transform:scaleX(0.9012);transform-origin:0 50%;">AbilitySystemCharacter.cpp</div>
<svg class="a" style="left:1020.5px;top:350.5px" width="5" height="7" viewBox="0 0 5 7"><path d="M0.5 0.5 L4 3.5 L0.5 6.5 Z" fill="none" stroke="#d6d6d6" stroke-width="1"/></svg>
<svg class="a" style="left:1034px;top:349px" width="8" height="10" viewBox="0 0 8 10"><path d="M0.5 0.5 L5 0.5 L7.5 3 L7.5 9.5 L0.5 9.5 Z" fill="none" stroke="#c8c8c8" stroke-width="1"/><path d="M2.5 3 L2.5 8 M2.5 5.5 L5 5.5 L5 8" stroke="#aaa" stroke-width="0.8" fill="none"/></svg>
<div class="t" style="left:1047.5px;top:349.5px;font-size:8.6px;color:#f0f0f0;transform:scaleX(0.9012);transform-origin:0 50%;">AbilitySystemCharacter.h</div>
<svg class="a" style="left:1020.5px;top:362.5px" width="5" height="7" viewBox="0 0 5 7"><path d="M0.5 0.5 L4 3.5 L0.5 6.5 Z" fill="none" stroke="#d6d6d6" stroke-width="1"/></svg>
<svg class="a" style="left:1034px;top:362px" width="10" height="8" viewBox="0 0 10 8"><path d="M0.3 2.8 L4.3 2.8 M2.3 0.8 L2.3 4.8 M5 5 L9.6 5 M7.3 2.7 L7.3 7.3" stroke="#c27fcf" stroke-width="1.5"/></svg>
<div class="t" style="left:1047.5px;top:361.5px;font-size:8.6px;color:#f0f0f0;transform:scaleX(0.9012);transform-origin:0 50%;">AbilitySystemGameMode.cpp</div>
<svg class="a" style="left:1020.5px;top:374.5px" width="5" height="7" viewBox="0 0 5 7"><path d="M0.5 0.5 L4 3.5 L0.5 6.5 Z" fill="none" stroke="#d6d6d6" stroke-width="1"/></svg>
<svg class="a" style="left:1034px;top:373px" width="8" height="10" viewBox="0 0 8 10"><path d="M0.5 0.5 L5 0.5 L7.5 3 L7.5 9.5 L0.5 9.5 Z" fill="none" stroke="#c8c8c8" stroke-width="1"/><path d="M2.5 3 L2.5 8 M2.5 5.5 L5 5.5 L5 8" stroke="#aaa" stroke-width="0.8" fill="none"/></svg>
<div class="t" style="left:1047.5px;top:373.5px;font-size:8.6px;color:#f0f0f0;transform:scaleX(0.9012);transform-origin:0 50%;">AbilitySystemGameMode.h</div>
<svg class="a" style="left:1020.5px;top:386.5px" width="5" height="7" viewBox="0 0 5 7"><path d="M0.5 0.5 L4 3.5 L0.5 6.5 Z" fill="none" stroke="#d6d6d6" stroke-width="1"/></svg>
<svg class="a" style="left:1034px;top:386px" width="10" height="8" viewBox="0 0 10 8"><path d="M0.3 2.8 L4.3 2.8 M2.3 0.8 L2.3 4.8 M5 5 L9.6 5 M7.3 2.7 L7.3 7.3" stroke="#c27fcf" stroke-width="1.5"/></svg>
<div class="t" style="left:1047.5px;top:385.5px;font-size:8.6px;color:#f0f0f0;transform:scaleX(0.9012);transform-origin:0 50%;">AbilitySystemHUD.cpp</div>
<svg class="a" style="left:1020.5px;top:398.5px" width="5" height="7" viewBox="0 0 5 7"><path d="M0.5 0.5 L4 3.5 L0.5 6.5 Z" fill="none" stroke="#d6d6d6" stroke-width="1"/></svg>
<svg class="a" style="left:1034px;top:397px" width="8" height="10" viewBox="0 0 8 10"><path d="M0.5 0.5 L5 0.5 L7.5 3 L7.5 9.5 L0.5 9.5 Z" fill="none" stroke="#c8c8c8" stroke-width="1"/><path d="M2.5 3 L2.5 8 M2.5 5.5 L5 5.5 L5 8" stroke="#aaa" stroke-width="0.8" fill="none"/></svg>
<div class="t" style="left:1047.5px;top:397.5px;font-size:8.6px;color:#f0f0f0;transform:scaleX(0.9012);transform-origin:0 50%;">AbilitySystemHUD.h</div>
<svg class="a" style="left:1020.5px;top:410.5px" width="5" height="7" viewBox="0 0 5 7"><path d="M0.5 0.5 L4 3.5 L0.5 6.5 Z" fill="none" stroke="#d6d6d6" stroke-width="1"/></svg>
<svg class="a" style="left:1034px;top:410px" width="10" height="8" viewBox="0 0 10 8"><path d="M0.3 2.8 L4.3 2.8 M2.3 0.8 L2.3 4.8 M5 5 L9.6 5 M7.3 2.7 L7.3 7.3" stroke="#c27fcf" stroke-width="1.5"/></svg>
<div class="t" style="left:1047.5px;top:409.5px;font-size:8.6px;color:#f0f0f0;transform:scaleX(0.9012);transform-origin:0 50%;">AbilitySystemProjectile.cpp</div>
<svg class="a" style="left:1020.5px;top:422.5px" width="5" height="7" viewBox="0 0 5 7"><path d="M0.5 0.5 L4 3.5 L0.5 6.5 Z" fill="none" stroke="#d6d6d6" stroke-width="1"/></svg>
<svg class="a" style="left:1034px;top:421px" width="8" height="10" viewBox="0 0 8 10"><path d="M0.5 0.5 L5 0.5 L7.5 3 L7.5 9.5 L0.5 9.5 Z" fill="none" stroke="#c8c8c8" stroke-width="1"/><path d="M2.5 3 L2.5 8 M2.5 5.5 L5 5.5 L5 8" stroke="#aaa" stroke-width="0.8" fill="none"/></svg>
<div class="t" style="left:1047.5px;top:421.5px;font-size:8.6px;color:#f0f0f0;transform:scaleX(0.9012);transform-origin:0 50%;">AbilitySystemProjectile.h</div>
<svg class="a" style="left:1022px;top:434px" width="10" height="8" viewBox="0 0 10 8"><path d="M4.5 1.5 Q0.5 0.5 0.5 4 Q0.5 7.5 4.5 6.5" stroke="#7fc16c" stroke-width="1.6" fill="none"/><path d="M6 2 L6 5 M8 2 L8 5 M5 3 L9 3 M5 4.5 L9 4.5" stroke="#7fc16c" stroke-width="0.8"/></svg>
<div class="t" style="left:1035.5px;top:433.5px;font-size:8.6px;color:#f0f0f0;transform:scaleX(0.9012);transform-origin:0 50%;">AbilitySystem.Target.cs</div>
<svg class="a" style="left:1022px;top:446px" width="10" height="8" viewBox="0 0 10 8"><path d="M4.5 1.5 Q0.5 0.5 0.5 4 Q0.5 7.5 4.5 6.5" stroke="#7fc16c" stroke-width="1.6" fill="none"/><path d="M6 2 L6 5 M8 2 L8 5 M5 3 L9 3 M5 4.5 L9 4.5" stroke="#7fc16c" stroke-width="0.8"/></svg>
<div class="t" style="left:1035.5px;top:445.5px;font-size:8.6px;color:#f0f0f0;transform:scaleX(0.9012);transform-origin:0 50%;">AbilitySystemEditor.Target.cs</div>
<svg class="a" style="left:1010px;top:457px" width="8" height="10" viewBox="0 0 8 10"><path d="M0.5 0.5 L5 0.5 L7.5 3 L7.5 9.5 L0.5 9.5 Z" fill="none" stroke="#e0e0e0" stroke-width="1"/></svg>
<div class="t" style="left:1023.5px;top:457.5px;font-size:8.6px;color:#f0f0f0;transform:scaleX(0.9012);transform-origin:0 50%;">AbilitySystem.uproject</div>
<div class="a" style="left:965px;top:500px;width:308px;height:14px;background:#2d2c30;"></div>
<div class="t" style="left:968.5px;top:502.5px;font-size:8.6px;color:#d0d0d0;transform:scaleX(0.9012);transform-origin:0 50%;">VA View</div>
<div class="t" style="left:1004px;top:502.5px;font-size:8.6px;color:#d0d0d0;transform:scaleX(0.8837);transform-origin:0 50%;">VA Outline</div>
<div class="a" style="left:1047px;top:500px;width:60px;height:13px;background:#252526;"></div>
<div class="t" style="left:1050px;top:502.5px;font-size:8.6px;color:#3f9ee6;transform:scaleX(0.8953);transform-origin:0 50%;">Solution Explorer</div>
<div class="t" style="left:1117px;top:502.5px;font-size:8.6px;color:#d0d0d0;transform:scaleX(0.8953);transform-origin:0 50%;">Team Explorer</div>
<div class="a" style="left:965px;top:519px;width:308px;height:15px;background:#2d2c30;"></div>
<div class="t" style="left:968px;top:522px;font-size:8.6px;color:#d0d0d0;transform:scaleX(0.8953);transform-origin:0 50%;">Properties</div>
<svg class="a" style="left:1241px;top:525px" width="6" height="4" viewBox="0 0 6 4"><path d="M0 0 L6 0 L3 4 Z" fill="#e0e0e0"/></svg>
<svg class="a" style="left:1252px;top:521px" width="7" height="10" viewBox="0 0 7 10"><path d="M2 0.5 L5 0.5 L5 6 L2 6 Z M0.5 6 L6.5 6 M3.5 6 L3.5 9.5" stroke="#e0e0e0" stroke-width="1" fill="none"/></svg>
<svg class="a" style="left:1262px;top:522px" width="8" height="8" viewBox="0 0 8 8"><path d="M0.5 0.5 L7.5 7.5 M7.5 0.5 L0.5 7.5" stroke="#e0e0e0" stroke-width="1.2"/></svg>
<div class="a" style="left:965px;top:535px;width:308px;height:14px;background:#333337;"></div>
<svg class="a" style="left:1266.5px;top:541px" width="4" height="3" viewBox="0 0 4 3"><path d="M0 0 L4 0 L2 2.5 Z" fill="#ccc"/></svg>
<div class="a" style="left:967px;top:551px;width:15px;height:15px;background:#26324a;border:1px solid #3f6fa8"></div>
<svg class="a" style="left:969px;top:553px" width="11" height="11" viewBox="0 0 11 11"><rect x="0.5" y="0.5" width="3" height="4" fill="none" stroke="#ddd"/><rect x="0.5" y="6" width="3" height="4" fill="none" stroke="#ddd"/><rect x="5" y="1" width="5" height="9" fill="#c8a8a8"/></svg>
<svg class="a" style="left:985px;top:552px" width="11" height="11" viewBox="0 0 11 11"><rect x="0" y="0.5" width="5" height="4.5" fill="#d8c8a0"/><rect x="0" y="6" width="5" height="4.5" fill="#ddd"/><path d="M8 1 L8 9 M6 7 L8 9.5 L10 7" stroke="#5aa8e8" stroke-width="1.2" fill="none"/></svg>
<svg class="a" style="left:1004px;top:552px" width="11" height="11" viewBox="0 0 11 11"><path d="M1 10 L5.5 5.5" stroke="#8a8a8a" stroke-width="2.2"/><path d="M5 6 Q3.8 1.8 8 0.8 L6.8 2.8 L8 4 L10 2.8 Q9.8 7 5.6 6.2 Z" fill="#8a8a8a"/></svg>
<div class="a" style="left:967px;top:567px;width:306px;height:114px;background:#252526;"></div>
<div class="a" style="left:11px;top:692px;width:1265px;height:8px;background:#332c31;"></div>
<div class="a" style="left:11px;top:700px;width:1265px;height:2px;background:#262c3e;"></div>
<div class="a" style="left:8px;top:702px;width:1270px;height:16px;background:#0a77d0;"></div>
<div class="a" style="left:8px;top:702px;width:1270px;height:1px;background:#2a72bc;"></div>
<div class="t" style="left:30px;top:685px;font-size:8.6px;color:#d0d0d0;transform:scaleX(0.8605);transform-origin:0 50%;">Error List</div>
<div class="t" style="left:69px;top:685px;font-size:8.6px;color:#d0d0d0;transform:scaleX(0.9302);transform-origin:0 50%;">Output</div>
<div class="a" style="left:30px;top:698px;width:30px;height:3px;background:#3a393d;"></div>
<div class="a" style="left:69px;top:698px;width:25px;height:3px;background:#3a393d;"></div>
<svg class="a" style="left:12px;top:705px" width="11" height="10" viewBox="0 0 11 10"><path d="M2.5 1 L10.5 1 L8.5 9 L0.5 9 Z" fill="none" stroke="#cfe6fa" stroke-width="1.1"/></svg>
<div class="t" style="left:28px;top:705px;font-size:8.6px;color:#e8f2fb;transform:scaleX(0.9302);transform-origin:0 50%;">Ready</div>
<div class="t" style="left:759px;top:705px;font-size:8.6px;color:#e8f2fb;transform:scaleX(0.9302);transform-origin:0 50%;">Ln 9</div>
<div class="t" style="left:821px;top:705px;font-size:8.6px;color:#e8f2fb;transform:scaleX(0.9302);transform-origin:0 50%;">Col 1</div>
<div class="t" style="left:882px;top:705px;font-size:8.6px;color:#e8f2fb;transform:scaleX(0.9302);transform-origin:0 50%;">Ch 1</div>
<div class="t" style="left:972px;top:705px;font-size:8.6px;color:#e8f2fb;transform:scaleX(0.9302);transform-origin:0 50%;">INS</div>
<svg class="a" style="left:1155px;top:705px" width="7" height="9" viewBox="0 0 7 9"><path d="M3.5 9 L3.5 1 M0.5 4 L3.5 0.5 L6.5 4" stroke="#e8f2fb" stroke-width="1.3" fill="none"/></svg>
<div class="t" style="left:1168px;top:705px;font-size:8.6px;color:#e8f2fb;transform:scaleX(0.9302);transform-origin:0 50%;">Add to Source Control</div>
<svg class="a" style="left:1253.5px;top:709px" width="4" height="3" viewBox="0 0 4 3"><path d="M0 0 L4 0 L2 2.5 Z" fill="#e8f2fb"/></svg>
<svg class="a" style="left:1224px;top:696px" width="20" height="16" viewBox="0 0 20 16"><path d="M2 14.5 L7.5 1.5 L10.5 2.5 L6 12 Q9.5 10 12.5 3 L15.5 4 L10.5 14.5 L8 14 L8.5 12.5 Q6 14.8 2 14.5 Z" fill="rgba(228,238,250,0.72)"/></svg>
<div class="t" style="left:1245px;top:700.5px;font-size:10px;color:rgba(232,242,252,0.8);transform:scaleX(0.94);transform-origin:0 50%;-webkit-text-stroke:0.3px rgba(232,242,252,0.8)">Udemy</div>
<div class="a" style="left:0px;top:718px;width:1280px;height:2px;background:#0b1422;"></div>
</div></body></html>
